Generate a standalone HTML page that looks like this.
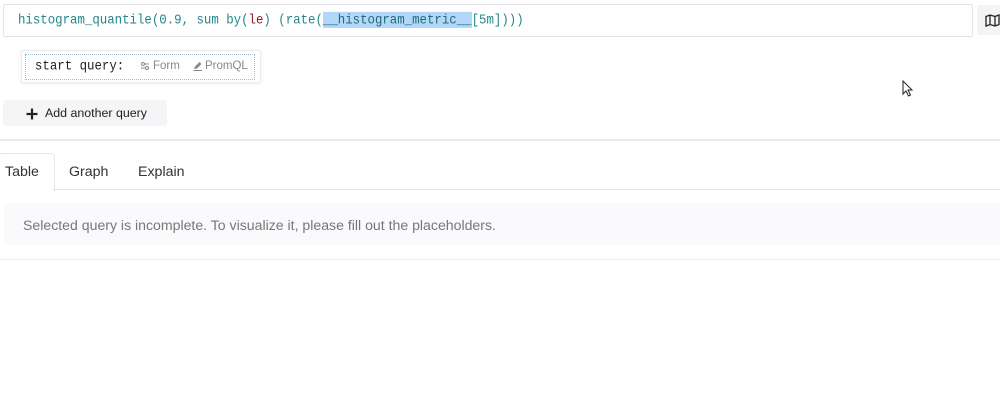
<!DOCTYPE html>
<html><head><style>
body{margin:0;width:1000px;height:405px;background:#fff;position:relative;overflow:hidden;font-family:"Liberation Sans",sans-serif;}
.a{position:absolute;}
.mono{font-family:"Liberation Mono",monospace;}
</style></head><body>
<div class="a" style="left:3px;top:4px;width:968px;height:31px;border:1px solid #e4e4e8;border-radius:2px;"></div>
<div class="a mono" style="left:18px;top:12px;font-size:12.4px;line-height:17px;color:#23868a;white-space:pre;transform:scaleY(1.15);transform-origin:0 50%;">histogram_quantile(0.9, sum by(<span style="color:#8b1f1f">le</span>) (rate(<span style="background:#b3d7fb;color:#1f6c75">__histogram_metric__</span>[5m])))</div>
<div class="a" style="left:977px;top:5px;width:30px;height:30px;background:#f4f4f6;border-radius:3px;"></div>
<svg class="a" style="left:985px;top:14px" width="15" height="13" viewBox="0 0 15 13"><path d="M1 2.5L5 1L10 2.5L14 1V10.5L10 12L5 10.5L1 12Z M5 1V10.5 M10 2.5V12" fill="none" stroke="#222" stroke-width="1.3"/></svg>
<div class="a" style="left:21px;top:50px;width:238px;height:31px;border:1px solid #ebebef;box-shadow:0 1px 3px rgba(0,0,0,.08);border-radius:2px;"></div>
<div class="a" style="left:25px;top:54px;width:228px;height:24px;border:1px dotted #9dbfd3;"></div>
<div class="a mono" style="left:35px;top:59px;font-size:12.4px;color:#222;transform:scaleY(1.15);transform-origin:0 50%;">start query:</div>
<svg class="a" style="left:140px;top:61px" width="10" height="10" viewBox="0 0 10 10"><path d="M1 3H9M1 7H9" stroke="#888" stroke-width="1"/><circle cx="3" cy="3" r="1.5" fill="#fff" stroke="#888"/><circle cx="7" cy="7" r="1.5" fill="#fff" stroke="#888"/></svg>
<div class="a" style="left:153px;top:60px;font-size:11.5px;color:#888;">Form</div>
<svg class="a" style="left:193px;top:61px" width="10" height="10" viewBox="0 0 10 10"><path d="M1 8L2 5.5L6.5 1L8.5 3L4 7.5Z" fill="#888"/><path d="M0.5 9.5H9" stroke="#888"/></svg>
<div class="a" style="left:205px;top:60px;font-size:11.5px;color:#888;">PromQL</div>
<div class="a" style="left:3px;top:100px;width:164px;height:26px;background:#f5f5f7;border-radius:3px;"></div>
<svg class="a" style="left:26px;top:108px" width="12" height="12" viewBox="0 0 12 12"><path d="M6 0.5V11.5M0.5 6H11.5" stroke="#222" stroke-width="2.2"/></svg>
<div class="a" style="left:45px;top:106px;font-size:12.4px;color:#222;">Add another query</div>
<div class="a" style="left:0;top:139px;width:1000px;height:2px;background:#ececf0;"></div>
<div class="a" style="left:-2px;top:153px;width:55px;height:37px;border:1px solid #e6e6ea;border-bottom:none;border-radius:4px 4px 0 0;background:#fff;"></div>
<div class="a" style="left:53px;top:189px;width:947px;height:1px;background:#e6e6ea;"></div>
<div class="a" style="left:5px;top:164px;font-size:14.2px;color:#333;">Table</div>
<div class="a" style="left:69px;top:164px;font-size:14.2px;color:#333;">Graph</div>
<div class="a" style="left:138px;top:164px;font-size:14.2px;color:#333;">Explain</div>
<div class="a" style="left:4px;top:203px;width:996px;height:42px;background:#fafafc;"></div>
<div class="a" style="left:23px;top:217px;font-size:14.1px;color:#777;">Selected query is incomplete. To visualize it, please fill out the placeholders.</div>
<div class="a" style="left:0;top:259px;width:1000px;height:1px;background:#ececf0;"></div>
<svg class="a" style="left:902px;top:80px" width="12" height="17" viewBox="0 0 12 17"><path d="M1 1V14L4 11L6.5 16L8.5 15L6 10H10Z" fill="#fff" stroke="#222" stroke-width="1"/></svg>
</body></html>
